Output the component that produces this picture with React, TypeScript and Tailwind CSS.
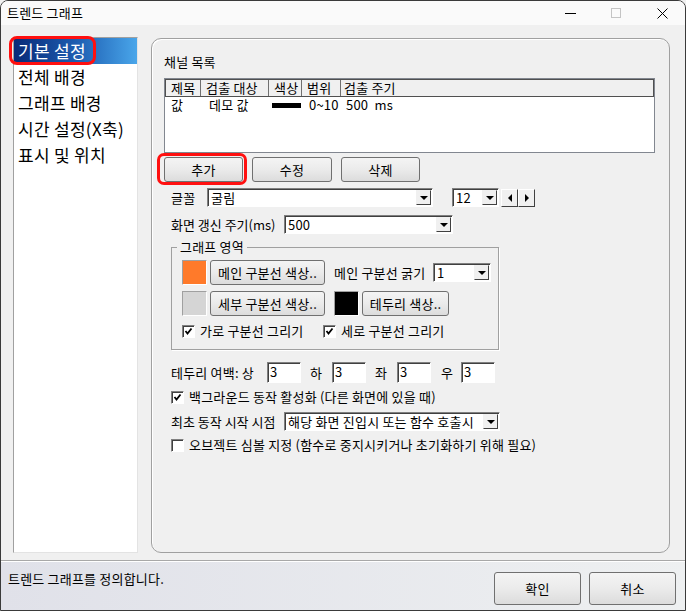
import React from "react";

const FONT = { fontFamily: '"Noto Sans CJK KR", "Noto Sans", sans-serif' };

function Check({ checked }: { checked: boolean }) {
  return (
    <span className="inline-flex h-[13px] w-[13px] shrink-0 items-center justify-center border border-t-[#808080] border-l-[#808080] border-b-white border-r-white bg-white shadow-[inset_1px_1px_0_#404040]">
      {checked && (
        <svg width="9" height="9" viewBox="0 0 9 9">
          <path d="M1.5 4 L3.5 6.5 L7.5 1.5" fill="none" stroke="#000" strokeWidth="1.8" />
        </svg>
      )}
    </span>
  );
}

function Arrow({ dir }: { dir: "down" | "left" | "right" }) {
  const pts =
    dir === "down" ? "0,0 8,0 4,4" : dir === "left" ? "4,0 4,8 0,4" : "0,0 0,8 4,4";
  const w = dir === "down" ? 8 : 4;
  const h = dir === "down" ? 4 : 8;
  return (
    <svg width={w} height={h} viewBox={`0 0 ${w} ${h}`}>
      <polygon points={pts} fill="#000" />
    </svg>
  );
}

function Combo({ value, className }: { value: string; className: string }) {
  return (
    <div
      className={`flex h-[19px] shrink-0 items-stretch border border-t-[#808080] border-l-[#808080] border-b-white border-r-white bg-white shadow-[inset_1px_1px_0_#404040] ${className}`}
    >
      <span className="flex-1 truncate pl-[3px] text-[13px] leading-[17px] text-black">{value}</span>
      <span className="my-[1px] mr-[1px] flex w-[15px] items-center justify-center border border-t-[#f0f0f0] border-l-[#f0f0f0] border-b-[#404040] border-r-[#404040] bg-[#f0f0f0]">
        <Arrow dir="down" />
      </span>
    </div>
  );
}

function Btn({ label, className }: { label: string; className: string }) {
  return (
    <div
      className={`flex shrink-0 items-center justify-center rounded-[3px] border border-[#707070] bg-gradient-to-b from-[#f4f4f4] via-[#ebebeb] to-[#dcdcdc] text-[13px] text-black ${className}`}
    >
      {label}
    </div>
  );
}

function NumBox({ value }: { value: string }) {
  return (
    <div className="h-[21px] w-[34px] shrink-0 border border-t-[#808080] border-l-[#808080] border-b-white border-r-white bg-white pl-[2px] text-[13px] leading-[17px] shadow-[inset_1px_1px_0_#404040]">
      {value}
    </div>
  );
}

export default function App() {
  const nav = ["기본 설정", "전체 배경", "그래프 배경", "시간 설정(X축)", "표시 및 위치"];
  return (
    <div style={FONT} className="h-[611px] w-[686px] overflow-hidden whitespace-nowrap bg-[#f0f0f0] tracking-[0.2px] text-black">
      <div className="flex h-full flex-col overflow-hidden rounded-t-[8px] border border-[#3a3a3a]">
        {/* title bar */}
        <div className="flex h-[24px] shrink-0 items-center bg-[#fafafa]">
          <span className="pl-[6px] text-[13px]">트렌드 그래프</span>
          <div className="ml-auto flex h-full items-center">
            <span className="flex w-[46px] items-center justify-center">
              <span className="block h-[1px] w-[11px] bg-black" />
            </span>
            <span className="flex w-[46px] items-center justify-center">
              <span className="block h-[10px] w-[10px] border border-[#c4c4c4]" />
            </span>
            <span className="flex w-[46px] items-center justify-center">
              <svg width="11" height="11" viewBox="0 0 11 11">
                <path d="M0.5 0.5 L10.5 10.5 M10.5 0.5 L0.5 10.5" stroke="#000" strokeWidth="1" />
              </svg>
            </span>
          </div>
        </div>

        {/* body */}
        <div className="flex h-[535px] shrink-0 pl-[12px] pt-[12px]">
          <div className="h-[516px] w-[125px] border border-t-[#a0a0a0] border-l-[#a0a0a0] border-b-[#e3e3e3] border-r-[#e3e3e3] bg-white">
            {nav.map((n, i) => (
              <div
                key={n}
                className={`relative flex h-[26px] items-center pl-[4px] text-[17px] tracking-[0.3px] ${
                  i === 0 ? "bg-gradient-to-r from-[#0a2a78] via-[#1d5cb0] to-[#4aa6ea] text-white" : ""
                }`}
              >
                {n}
                {i === 0 && (
                  <span className="absolute left-[-5px] top-[-2px] h-[29px] w-[87px] rounded-[8px] border-[3px] border-[#ff1010]" />
                )}
              </div>
            ))}
          </div>

          <div className="ml-[13px] mt-[1px] h-[515px] w-[519px] rounded-[10px] border border-[#a0a0a0] pl-[12px] pt-[15px] shadow-[inset_1px_1px_0_#fff]">
            <div className="h-[16px] text-[13px] leading-[16px]">채널 목록</div>
            {/* list view */}
            <div className="mt-[8px] h-[75px] w-[491px] border border-[#828790] bg-white">
              <div className="flex h-[18px] border border-[#505050] bg-[#f0f0f0] text-[13px] leading-[16px]">
                {[
                  ["제목", "w-[35px]"],
                  ["검출 대상", "w-[68px]"],
                  ["색상", "w-[33px]"],
                  ["범위", "w-[39px]"],
                  ["검출 주기", "flex-1"],
                ].map(([t, w]) => (
                  <span key={t} className={`${w} border-r border-[#707070] pl-[5px] last:border-r-0 last:pl-[3px]`}>
                    {t}
                  </span>
                ))}
              </div>
              <div className="flex h-[16px] items-center text-[13px]">
                <span className="w-[35px] pl-[6px]">값</span>
                <span className="w-[68px] pl-[9px]">데모 값</span>
                <span className="flex w-[33px] items-center pl-[4px]">
                  <span className="block h-[5px] w-[30px] bg-black" />
                </span>
                <span className="w-[39px] pl-[8px]">0~10</span>
                <span className="pl-[6px]">500&nbsp; ms</span>
              </div>
            </div>

            {/* buttons */}
            <div className="mt-[4px] flex h-[25px] gap-[9px]">
              <div className="relative">
                <Btn label="추가" className="h-[25px] w-[79px]" />
                <span className="absolute left-[-7px] top-[-4px] h-[32px] w-[90px] rounded-[7px] border-[3px] border-[#ff1010]" />
              </div>
              <Btn label="수정" className="h-[25px] w-[80px]" />
              <Btn label="삭제" className="h-[25px] w-[79px]" />
            </div>

            <div className="pl-[7px] text-[13px]">
              {/* font */}
              <div className="mt-[6px] flex h-[19px] items-center">
                <span className="w-[36px] shrink-0">글꼴</span>
                <Combo value="굴림" className="w-[226px]" />
                <Combo value="12" className="ml-[19px] w-[47px]" />
                <span className="ml-[2px] flex h-[18px] w-[17px] items-center justify-center border border-t-white border-l-white border-b-[#404040] border-r-[#404040] bg-[#f0f0f0]">
                  <Arrow dir="left" />
                </span>
                <span className="flex h-[18px] w-[17px] items-center justify-center border border-t-white border-l-white border-b-[#404040] border-r-[#404040] bg-[#f0f0f0]">
                  <Arrow dir="right" />
                </span>
              </div>

              {/* refresh */}
              <div className="mt-[8px] flex h-[19px] items-center">
                <span className="w-[113px] shrink-0 tracking-normal">화면 갱신 주기(ms)</span>
                <Combo value="500" className="w-[169px]" />
              </div>

              {/* group */}
              <div className="relative mt-[13px] h-[103px] w-[328px] border border-[#a0a0a0] shadow-[1px_1px_0_#fff] pl-[10px] pt-[12px]">
                <span className="absolute left-[5px] top-[-9px] bg-[#f0f0f0] px-[3px] leading-[16px]">그래프 영역</span>
                <div className="flex h-[25px] items-center">
                  <span className="h-[25px] w-[25px] border border-t-[#a0a0a0] border-l-[#a0a0a0] border-b-white border-r-white bg-[#ff7a2a]" />
                  <Btn label="메인 구분선 색상.." className="ml-[3px] h-[25px] w-[115px]" />
                  <span className="ml-[9px]">메인 구분선 굵기</span>
                  <Combo value="1" className="ml-auto mr-[7px] w-[58px]" />
                </div>
                <div className="mt-[6px] flex h-[25px] items-center">
                  <span className="h-[25px] w-[25px] border border-t-[#a0a0a0] border-l-[#a0a0a0] border-b-white border-r-white bg-[#d5d5d5]" />
                  <Btn label="세부 구분선 색상.." className="ml-[3px] h-[25px] w-[115px]" />
                  <span className="ml-[9px] h-[25px] w-[25px] border border-t-[#a0a0a0] border-l-[#a0a0a0] border-b-white border-r-white bg-black" />
                  <Btn label="테두리 색상.." className="ml-[3px] h-[25px] w-[87px]" />
                </div>
                <div className="mt-[7px] flex h-[16px] items-center">
                  <Check checked />
                  <span className="ml-[5px] w-[123px]">가로 구분선 그리기</span>
                  <Check checked />
                  <span className="ml-[5px]">세로 구분선 그리기</span>
                </div>
              </div>

              {/* margins */}
              <div className="mt-[12px] flex h-[21px] items-center">
                <span className="w-[96px] shrink-0">테두리 여백: 상</span>
                <NumBox value="3" />
                <span className="w-[31px] shrink-0 pl-[9px]">하</span>
                <NumBox value="3" />
                <span className="w-[31px] shrink-0 pl-[9px]">좌</span>
                <NumBox value="3" />
                <span className="w-[30px] shrink-0 pl-[10px]">우</span>
                <NumBox value="3" />
              </div>

              <div className="mt-[6px] flex h-[16px] items-center">
                <Check checked />
                <span className="ml-[5px]">백그라운드 동작 활성화 (다른 화면에 있을 때)</span>
              </div>

              <div className="mt-[7px] flex h-[19px] items-center">
                <span className="w-[113px] shrink-0 tracking-normal">최초 동작 시작 시점</span>
                <Combo value="해당 화면 진입시 또는 함수 호출시" className="w-[216px]" />
              </div>

              <div className="mt-[6px] flex h-[16px] items-center">
                <Check checked={false} />
                <span className="ml-[5px]">오브젝트 심볼 지정 (함수로 중지시키거나 초기화하기 위해 필요)</span>
              </div>
            </div>
          </div>
        </div>

        {/* footer */}
        <div className="flex flex-1 border-t border-[#a8a8a8] bg-gradient-to-r from-[#e0e1e9] to-[#eef0f1] shadow-[inset_0_1px_0_#fff]">
          <span className="pl-[7px] pt-[8px] text-[13px]">트렌드 그래프를 정의합니다.</span>
          <div className="ml-auto flex gap-[8px] pr-[9px] pt-[11px]">
            <Btn label="확인" className="h-[33px] w-[87px]" />
            <Btn label="취소" className="h-[33px] w-[87px]" />
          </div>
        </div>
      </div>
    </div>
  );
}
